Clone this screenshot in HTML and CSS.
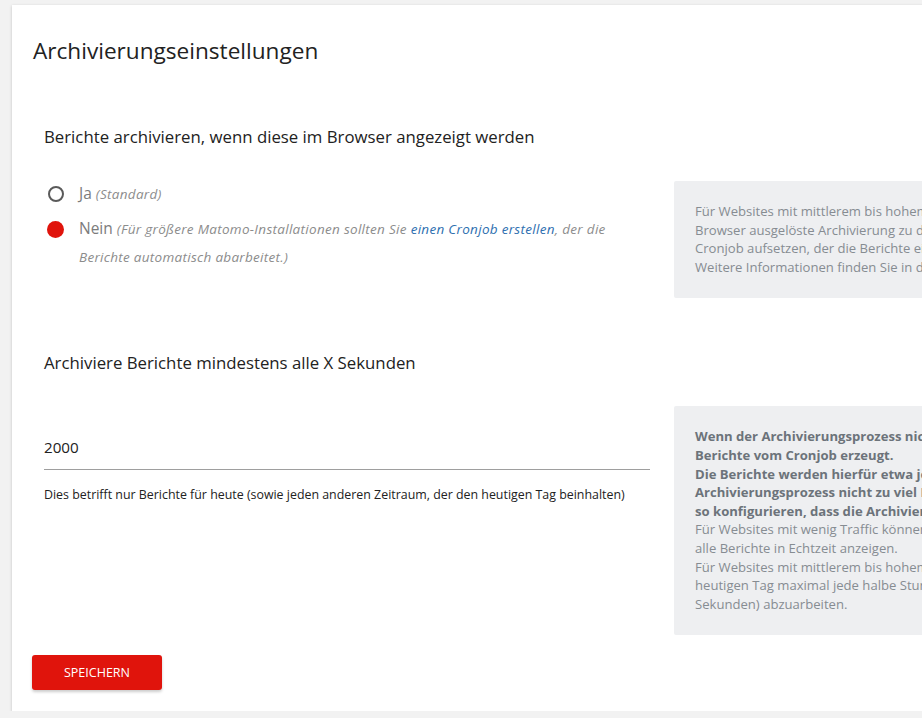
FILE: index.html
```html
<!DOCTYPE html>
<html lang="de">
<head>
    <meta charset="UTF-8">
    <meta name="viewport" content="width=device-width, initial-scale=1.0">
    <title>Archivierungseinstellungen</title>
    <link rel="stylesheet" href="styles.css">
</head>
<body>

    <div class="card">
        <h2 class="card-title">Archivierungseinstellungen</h2>

        <div class="section">
            <h3 class="section-title">Berichte archivieren, wenn diese im Browser angezeigt werden</h3>
            <div class="form-row first-row">
                <div class="field">
                    <label class="radio">
                        <span class="circle"></span>
                        <span class="radio-text">Ja <em>(Standard)</em></span>
                    </label>
                    <label class="radio">
                        <span class="circle checked"></span>
                        <span class="radio-text">Nein <em>(Für größere Matomo-Installationen sollten Sie <a href="#">einen Cronjob erstellen</a>, der die Berichte automatisch abarbeitet.)</em></span>
                    </label>
                </div>
                <div class="help">
                    Für Websites mit mittlerem bis hohem Traffic wird empfohlen, die vom<br>
                    Browser ausgelöste Archivierung zu deaktivieren. Stattdessen sollten Sie einen<br>
                    Cronjob aufsetzen, der die Berichte einmal pro Stunde verarbeitet.<br>
                    Weitere Informationen finden Sie in der FAQ.
                </div>
            </div>
        </div>

        <div class="section">
            <h3 class="section-title">Archiviere Berichte mindestens alle X Sekunden</h3>
            <div class="form-row second-row">
                <div class="field">
                    <div class="input-line">2000</div>
                    <div class="input-note">Dies betrifft nur Berichte für heute (sowie jeden anderen Zeitraum, der den heutigen Tag beinhalten)</div>
                </div>
                <div class="help">
                    <strong>Wenn der Archivierungsprozess nicht über den Browser ausgelöst wird, werden neue<br>
                    Berichte vom Cronjob erzeugt.<br>
                    Die Berichte werden hierfür etwa jede Stunde neu berechnet. Damit der<br>
                    Archivierungsprozess nicht zu viel Last erzeugt, sollten Sie den Cronjob<br>
                    so konfigurieren, dass die Archivierung nur stündlich erfolgt.</strong><br>
                    Für Websites mit wenig Traffic können Sie diesen Wert niedrig halten und<br>
                    alle Berichte in Echtzeit anzeigen.<br>
                    Für Websites mit mittlerem bis hohem Traffic empfehlen wir, Berichte für den<br>
                    heutigen Tag maximal jede halbe Stunde (1800<br>
                    Sekunden) abzuarbeiten.
                </div>
            </div>
        </div>

        <button class="save">SPEICHERN</button>
    </div>

</body>
</html>
```

FILE: styles.css
```css
body {
    font-family: "Open Sans", "Noto Sans", Arial, sans-serif;
    margin: 0;
    padding: 0;
    background-color: #f2f2f2;
    color: #212121;
    overflow: hidden;
}
.card {
    margin: 5px 0 0 12px;
    width: 1100px;
    background-color: white;
    box-shadow: 0 1px 3px rgba(0, 0, 0, 0.2);
    padding: 0 0 21px 0;
}
.card-title {
    margin: 0;
    padding: 31px 21px 0 21px;
    font-size: 22.6px;
    font-weight: normal;
    line-height: 30px;
    color: #222;
}
.section {
    padding-left: 32px;
}
.section-title {
    margin: 0;
    font-size: 16.8px;
    font-weight: normal;
    line-height: 24px;
    color: #222;
}
.card-title + .section .section-title {
    padding-top: 59px;
}
.section + .section .section-title {
    padding-top: 53px;
}
.form-row {
    display: flex;
    align-items: flex-start;
}
.first-row {
    margin-top: 32px;
}
.second-row {
    margin-top: 31px;
}
.field {
    width: 606px;
    flex-shrink: 0;
}
.help {
    margin-left: 24px;
    width: 460px;
    white-space: nowrap;
    background-color: #eeeff1;
    border-radius: 2px;
    padding: 21px 21px 22px 21px;
    font-size: 13.1px;
    line-height: 18.6px;
    color: #868c92;
}
.help strong {
    color: #6c737a;
}

/* Radios */
.radio {
    display: flex;
    align-items: flex-start;
    margin-top: 3px;
}
.radio + .radio {
    margin-top: 11px;
}
.circle {
    flex-shrink: 0;
    width: 12px;
    height: 12px;
    border: 2px solid #5a5a5a;
    border-radius: 50%;
    margin: 2px 15px 0 4px;
}
.circle.checked {
    width: 17px;
    height: 17px;
    border: none;
    background-color: #e0140c;
    margin: 2px 15px 0 3px;
}
.radio-text {
    font-size: 15.5px;
    line-height: 27px;
    margin-top: -4px;
    color: #7c7c7c;
}
.radio-text em {
    font-size: 13.5px;
    letter-spacing: 0.3px;
    color: #8c8c8c;
}
.radio-text a {
    color: #2e6fb0;
    text-decoration: none;
}

/* Input */
.input-line {
    font-size: 15.2px;
    line-height: 22px;
    padding: 30px 0 11px 0;
    border-bottom: 1px solid #9e9e9e;
    color: #222;
}
.input-note {
    margin-top: 17px;
    font-size: 12.4px;
    line-height: 16px;
    color: #222;
}

/* Button */
.save {
    display: block;
    margin: 20px 0 0 20px;
    width: 130px;
    height: 35px;
    border: none;
    border-radius: 3px;
    background-color: #e0140c;
    color: white;
    font-family: "Open Sans", "Noto Sans", Arial, sans-serif;
    font-size: 12.5px;
    box-shadow: 0 2px 3px rgba(0, 0, 0, 0.2);
    cursor: pointer;
}
```
